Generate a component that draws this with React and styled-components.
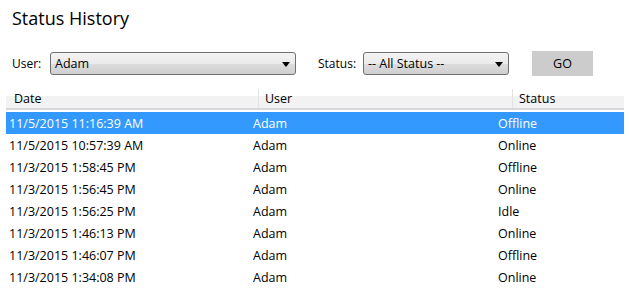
import React from "react";
import styled, { createGlobalStyle } from "styled-components";

const Global = createGlobalStyle`
  html, body { margin: 0; padding: 0; background: #fff; }
  body { font-family: "Open Sans", "Noto Sans", sans-serif; color: #000; }
`;

const Page = styled.div`
  width: 629px;
  height: 293px;
  overflow: hidden;
  padding: 0 5px 0 6px;
  box-sizing: border-box;
`;

const Title = styled.h1`
  margin: 0;
  padding-left: 6px;
  height: 36px;
  line-height: 36px;
  font-size: 18px;
  font-weight: 400;
`;

const Controls = styled.div`
  display: flex;
  align-items: center;
  margin-top: 15px;
  height: 25px;
  padding-left: 6px;
`;

const Label = styled.span`
  font-size: 12px;
  width: ${(p) => p.$w}px;
  margin-left: ${(p) => p.$ml || 0}px;
  flex: none;
`;

const Select = styled.div`
  position: relative;
  box-sizing: border-box;
  width: ${(p) => p.$w}px;
  height: 23px;
  border: 1px solid #707070;
  border-radius: 3px;
  background: linear-gradient(#f3f3f3 0%, #ebebeb 50%, #dddddd 51%, #cfcfcf 100%);
  display: flex;
  align-items: center;
  padding-left: 4px;
  font-size: 12.5px;
  flex: none;
`;

const Arrow = styled.svg`
  position: absolute;
  right: 5px;
  top: 9px;
`;

const GoButton = styled.button`
  margin-left: 23px;
  width: 61px;
  height: 25px;
  border: none;
  background: #cccccc;
  font-family: inherit;
  font-size: 12.5px;
  color: #000;
  padding: 0;
`;

const cols = "252px 254px 1fr";

const Header = styled.div`
  display: grid;
  grid-template-columns: ${cols};
  margin-top: 13px;
  height: 21px;
  box-sizing: border-box;
  border-bottom: 2px solid #d6d8db;
  background: linear-gradient(#ffffff 0%, #ffffff 35%, #f2f2f2 36%, #f2f2f2 100%);
  width: 618px;
`;

const HeadCell = styled.div`
  font-size: 12.5px;
  line-height: 19px;
  padding-left: ${(p) => p.$pl}px;
  border-left: ${(p) => (p.$first ? "none" : "1px solid #e3e3e3")};
`;

const List = styled.div`
  margin-top: 2px;
  width: 618px;
`;

const Row = styled.div`
  display: grid;
  grid-template-columns: 244px 245px 1fr;
  height: 22px;
  padding-left: 3px;
  align-items: center;
  font-size: 12.5px;
  background: ${(p) => (p.$selected ? "#3399ff" : "transparent")};
  color: ${(p) => (p.$selected ? "#fff" : "#000")};
`;

const rows = [
  ["11/5/2015 11:16:39 AM", "Adam", "Offline"],
  ["11/5/2015 10:57:39 AM", "Adam", "Online"],
  ["11/3/2015 1:58:45 PM", "Adam", "Offline"],
  ["11/3/2015 1:56:45 PM", "Adam", "Online"],
  ["11/3/2015 1:56:25 PM", "Adam", "Idle"],
  ["11/3/2015 1:46:13 PM", "Adam", "Online"],
  ["11/3/2015 1:46:07 PM", "Adam", "Offline"],
  ["11/3/2015 1:34:08 PM", "Adam", "Online"],
];

const DropArrow = () => (
  <Arrow width="8" height="5" viewBox="0 0 8 5">
    <path d="M0 0 H8 L4 5 Z" fill="#000" />
  </Arrow>
);

export default function App() {
  return (
    <Page>
      <Global />
      <Title>Status History</Title>
      <Controls>
        <Label $w={38}>User:</Label>
        <Select $w={246}>
          Adam
          <DropArrow />
        </Select>
        <Label $w={45} $ml={22}>Status:</Label>
        <Select $w={146}>
          -- All Status --
          <DropArrow />
        </Select>
        <GoButton>GO</GoButton>
      </Controls>
      <Header>
        <HeadCell $first $pl={8}>Date</HeadCell>
        <HeadCell $pl={6}>User</HeadCell>
        <HeadCell $pl={6}>Status</HeadCell>
      </Header>
      <List>
        {rows.map((r, i) => (
          <Row key={i} $selected={i === 0}>
            <span>{r[0]}</span>
            <span>{r[1]}</span>
            <span>{r[2]}</span>
          </Row>
        ))}
      </List>
    </Page>
  );
}
